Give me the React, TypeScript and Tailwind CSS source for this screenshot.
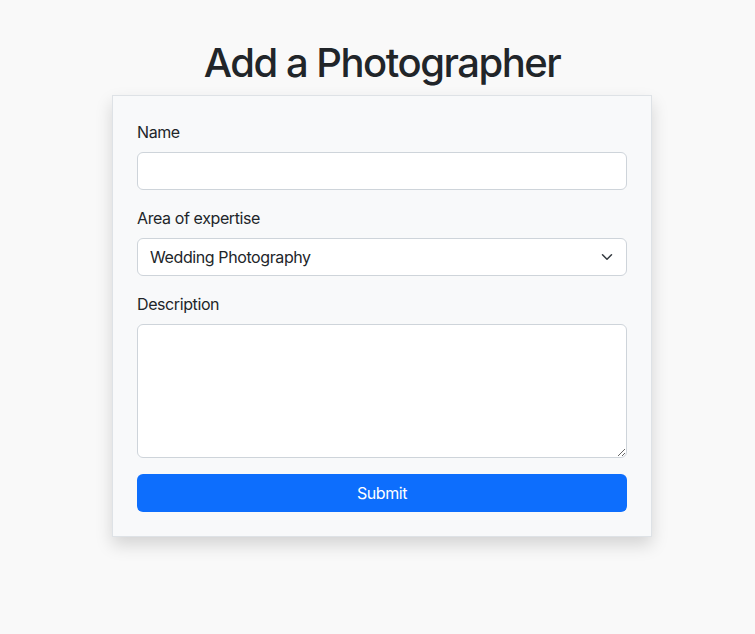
import { useState } from 'react'

const campo =
  'block w-full h-[38px] rounded-[6px] border border-[#ced4da] bg-white px-3 text-base tracking-[-0.4px] text-[#212529] outline-none'

export default function App() {
  const [nombre, setNombre] = useState('')
  const [area, setArea] = useState('Wedding Photography')
  const [descripcion, setDescripcion] = useState('')

  return (
    <div
      className="min-h-screen bg-[#f9f9f9] pt-[39px] pl-[9px] text-[#212529] tracking-[-0.4px]"
      style={{ fontFamily: 'Inter, "Noto Sans", sans-serif' }}
    >
      <h1 className="mb-2 text-center text-[40px] font-medium leading-[48px] tracking-[-1.5px]">
        Add a Photographer
      </h1>

      <form
        className="mx-auto w-[540px] border border-[#dee2e6] bg-[#f8f9fa] p-6 shadow-[0_8px_16px_rgba(0,0,0,0.15)]"
        onSubmit={(e) => e.preventDefault()}
      >
        <label className="mb-2 block text-base leading-6">Name</label>
        <input
          type="text"
          value={nombre}
          onChange={(e) => setNombre(e.target.value)}
          className={campo}
        />

        <label className="mt-4 mb-2 block text-base leading-6">Area of expertise</label>
        <div className="relative">
          <select
            value={area}
            onChange={(e) => setArea(e.target.value)}
            className={`${campo} appearance-none pr-9`}
          >
            <option>Wedding Photography</option>
            <option>Portrait Photography</option>
            <option>Event Photography</option>
          </select>
          <svg
            className="pointer-events-none absolute right-3 top-[13px]"
            width="16"
            height="12"
            viewBox="0 0 16 16"
            fill="none"
            stroke="#343a40"
            strokeWidth="2"
            strokeLinecap="round"
            strokeLinejoin="round"
          >
            <path d="m2 5 6 6 6-6" />
          </svg>
        </div>

        <label className="mt-4 mb-2 block text-base leading-6">Description</label>
        <textarea
          value={descripcion}
          onChange={(e) => setDescripcion(e.target.value)}
          className="block h-[134px] w-full rounded-[6px] border border-[#ced4da] bg-white px-3 py-1.5 text-base outline-none"
        />

        <button
          type="submit"
          className="mt-4 block h-[38px] w-full rounded-[6px] bg-[#0d6efd] text-base tracking-[-0.4px] text-white"
        >
          Submit
        </button>
      </form>
    </div>
  )
}
